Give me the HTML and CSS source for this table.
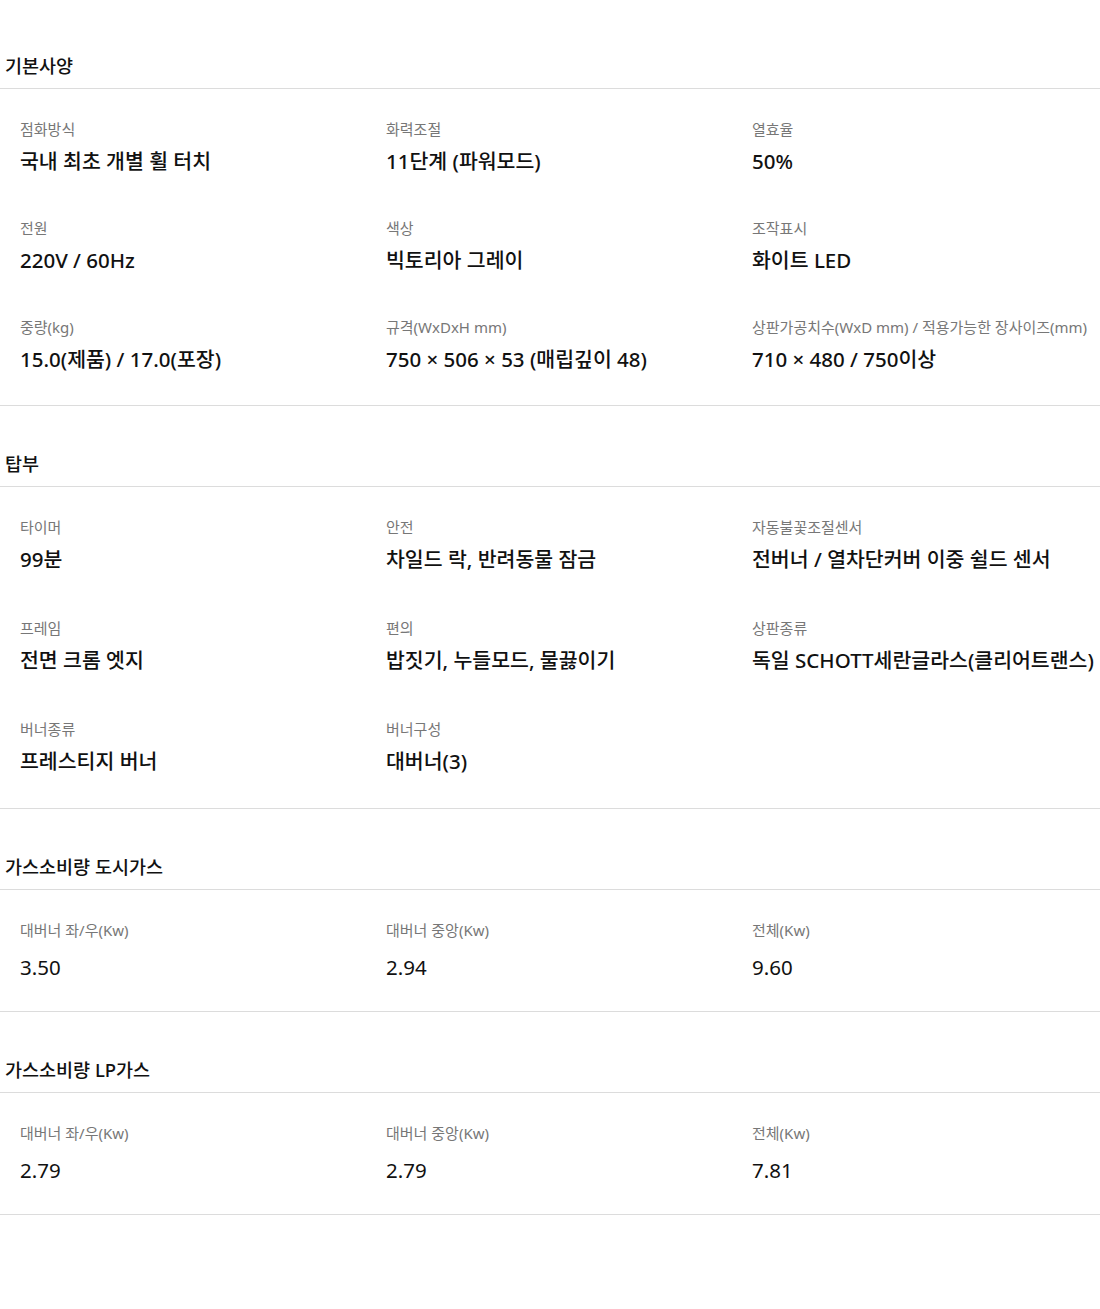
FILE: index.html
```html
<!DOCTYPE html>
<html lang="ko">
<head>
<meta charset="utf-8">
<title>제품 사양</title>
<link rel="stylesheet" href="styles.css">
</head>
<body>
<div class="spec">
  <section class="spec-section spec-section--basic">
    <h2 class="spec-title">기본사양</h2>
    <ul class="spec-grid">
      <li class="spec-item"><span class="spec-label">점화방식</span><span class="spec-value">국내 최초 개별 휠 터치</span></li>
      <li class="spec-item"><span class="spec-label">화력조절</span><span class="spec-value">11단계 (파워모드)</span></li>
      <li class="spec-item"><span class="spec-label">열효율</span><span class="spec-value">50%</span></li>
      <li class="spec-item"><span class="spec-label">전원</span><span class="spec-value">220V / 60Hz</span></li>
      <li class="spec-item"><span class="spec-label">색상</span><span class="spec-value">빅토리아 그레이</span></li>
      <li class="spec-item"><span class="spec-label">조작표시</span><span class="spec-value">화이트 LED</span></li>
      <li class="spec-item"><span class="spec-label">중량(kg)</span><span class="spec-value">15.0(제품) / 17.0(포장)</span></li>
      <li class="spec-item"><span class="spec-label">규격(WxDxH mm)</span><span class="spec-value">750 × 506 × 53 (매립깊이 48)</span></li>
      <li class="spec-item"><span class="spec-label">상판가공치수(WxD mm) / 적용가능한 장사이즈(mm)</span><span class="spec-value">710 × 480 / 750이상</span></li>
    </ul>
  </section>
  <section class="spec-section">
    <h2 class="spec-title">탑부</h2>
    <ul class="spec-grid">
      <li class="spec-item"><span class="spec-label">타이머</span><span class="spec-value">99분</span></li>
      <li class="spec-item"><span class="spec-label">안전</span><span class="spec-value">차일드 락, 반려동물 잠금</span></li>
      <li class="spec-item"><span class="spec-label">자동불꽃조절센서</span><span class="spec-value">전버너 / 열차단커버 이중 쉴드 센서</span></li>
      <li class="spec-item"><span class="spec-label">프레임</span><span class="spec-value">전면 크롬 엣지</span></li>
      <li class="spec-item"><span class="spec-label">편의</span><span class="spec-value">밥짓기, 누들모드, 물끓이기</span></li>
      <li class="spec-item"><span class="spec-label">상판종류</span><span class="spec-value">독일 SCHOTT세란글라스(클리어트랜스)</span></li>
      <li class="spec-item"><span class="spec-label">버너종류</span><span class="spec-value">프레스티지 버너</span></li>
      <li class="spec-item"><span class="spec-label">버너구성</span><span class="spec-value">대버너(3)</span></li>
    </ul>
  </section>
  <section class="spec-section spec-section--gas">
    <h2 class="spec-title">가스소비량 도시가스</h2>
    <ul class="spec-grid">
      <li class="spec-item"><span class="spec-label">대버너 좌/우(Kw)</span><span class="spec-value">3.50</span></li>
      <li class="spec-item"><span class="spec-label">대버너 중앙(Kw)</span><span class="spec-value">2.94</span></li>
      <li class="spec-item"><span class="spec-label">전체(Kw)</span><span class="spec-value">9.60</span></li>
    </ul>
  </section>
  <section class="spec-section spec-section--gas">
    <h2 class="spec-title">가스소비량 LP가스</h2>
    <ul class="spec-grid">
      <li class="spec-item"><span class="spec-label">대버너 좌/우(Kw)</span><span class="spec-value">2.79</span></li>
      <li class="spec-item"><span class="spec-label">대버너 중앙(Kw)</span><span class="spec-value">2.79</span></li>
      <li class="spec-item"><span class="spec-label">전체(Kw)</span><span class="spec-value">7.81</span></li>
    </ul>
  </section>
</div>
</body>
</html>
```

FILE: styles.css
```css
html, body {
  margin: 0;
  padding: 0;
  background: #fff;
}

body {
  font-family: "Noto Sans", "Noto Sans CJK KR", sans-serif;
  color: #111;
}

.spec {
  padding-top: 8px;
}

.spec-section {
  border-bottom: 1px solid #dcdcdc;
}

.spec-title {
  margin: 0;
  padding: 45px 5px 9px;
  font-size: 18.5px;
  line-height: 26px;
  font-weight: 500;
  color: #111;
  border-bottom: 1px solid #dcdcdc;
}

.spec-grid {
  list-style: none;
  margin: 0;
  padding: 30px 0 33px 20px;
  display: grid;
  grid-template-columns: repeat(3, 366px);
  row-gap: 45px;
}

.spec-item {
  display: flex;
  flex-direction: column;
  gap: 8px;
  white-space: nowrap;
}

.spec-label {
  font-size: 15px;
  line-height: 20px;
  color: #777;
}

.spec-value {
  font-size: 20.5px;
  line-height: 28px;
  font-weight: 500;
  color: #111;
}

.spec-section--basic .spec-grid {
  row-gap: 43px;
  padding-bottom: 32px;
}

.spec-section--gas .spec-grid {
  padding-bottom: 30px;
}

.spec-section--gas .spec-item {
  gap: 13px;
}

.spec-section--gas .spec-value {
  font-weight: 400;
}
```
